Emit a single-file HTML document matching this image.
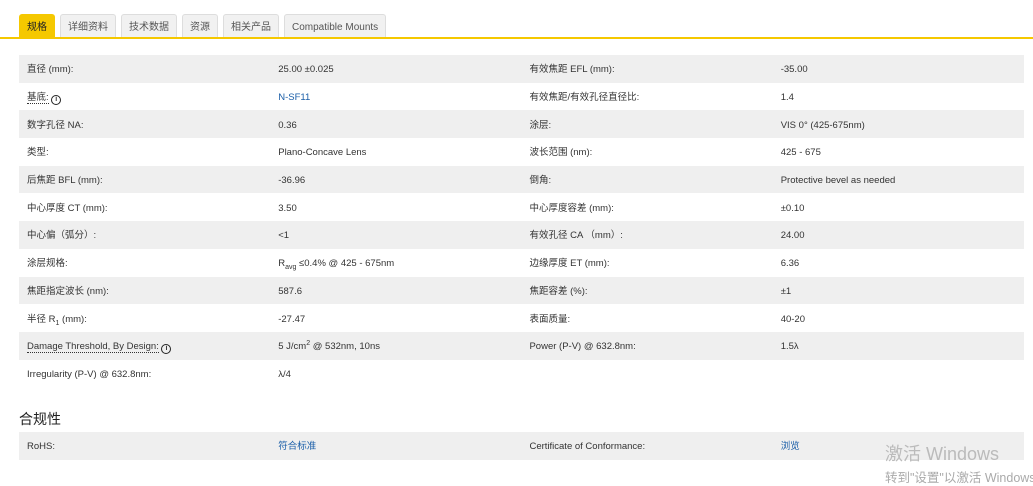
<!DOCTYPE html>
<html><head><meta charset="utf-8"><style>
body{margin:0;width:1033px;height:484px;overflow:hidden;background:#fff;font-family:"Liberation Sans","Noto Sans CJK SC",sans-serif;color:#333;font-size:10px;position:relative}
.tabs{position:absolute;left:19px;top:14px;display:flex;gap:5px}
.tab{height:24px;line-height:25px;padding:0 7px;background:#f1f1f1;border:1px solid #ddd;border-bottom:none;border-radius:3px 3px 0 0;color:#555;font-size:10px;box-sizing:border-box}
.tab.on{background:#f5c800;border-color:#f5c800;color:#222}
.line{position:absolute;left:0;right:0;top:37px;height:2px;background:#f5c800}
table{position:absolute;left:19px;width:1005px;border-collapse:collapse;table-layout:fixed}
td{height:27.7px;padding:3px 0 0 8px;box-sizing:border-box;font-size:9.5px;line-height:12px;color:#333;vertical-align:middle;width:243px;white-space:nowrap}
sub,sup{font-size:7px;line-height:0}
tr.g td{background:#efefef}
a{color:#1a5ea8;text-decoration:none}
.u{border-bottom:1px dotted #333;line-height:12px}
.i{display:inline-block;width:8px;height:8px;border:1.5px solid #222;border-radius:50%;font-size:7px;line-height:8px;text-align:center;font-weight:bold;vertical-align:-1px}
h3{position:absolute;left:19px;top:409px;margin:0;font-size:14px;font-weight:normal;color:#222}
.w1{position:absolute;left:885px;top:440px;font-size:18px;color:#bbb}
.w2{position:absolute;left:885px;top:467px;font-size:12.5px;color:#aaa;white-space:nowrap}
</style></head><body>
<div class="tabs"><div class="tab on">规格</div><div class="tab">详细资料</div><div class="tab">技术数据</div><div class="tab">资源</div><div class="tab">相关产品</div><div class="tab">Compatible Mounts</div></div>
<div class="line"></div>
<table style="top:55px">
<tr class="g"><td>直径 (mm):</td><td>25.00 ±0.025</td><td>有效焦距 EFL (mm):</td><td>-35.00</td></tr>
<tr><td><span class="u">基底:</span> <span class="i">i</span></td><td><a>N-SF11</a></td><td>有效焦距/有效孔径直径比:</td><td>1.4</td></tr>
<tr class="g"><td>数字孔径 NA:</td><td>0.36</td><td>涂层:</td><td>VIS 0° (425-675nm)</td></tr>
<tr><td>类型:</td><td>Plano-Concave Lens</td><td>波长范围 (nm):</td><td>425 - 675</td></tr>
<tr class="g"><td>后焦距 BFL (mm):</td><td>-36.96</td><td>倒角:</td><td>Protective bevel as needed</td></tr>
<tr><td>中心厚度 CT (mm):</td><td>3.50</td><td>中心厚度容差 (mm):</td><td>±0.10</td></tr>
<tr class="g"><td>中心偏（弧分）:</td><td>&lt;1</td><td>有效孔径 CA （mm）:</td><td>24.00</td></tr>
<tr><td>涂层规格:</td><td>R<sub>avg</sub> ≤0.4% @ 425 - 675nm</td><td>边缘厚度 ET (mm):</td><td>6.36</td></tr>
<tr class="g"><td>焦距指定波长 (nm):</td><td>587.6</td><td>焦距容差 (%):</td><td>±1</td></tr>
<tr><td>半径 R<sub>1</sub> (mm):</td><td>-27.47</td><td>表面质量:</td><td>40-20</td></tr>
<tr class="g"><td><span class="u">Damage Threshold, By Design:</span> <span class="i">i</span></td><td>5 J/cm<sup>2</sup> @ 532nm, 10ns</td><td>Power (P-V) @ 632.8nm:</td><td>1.5λ</td></tr>
<tr><td>Irregularity (P-V) @ 632.8nm:</td><td>λ/4</td><td></td><td></td></tr>
</table>
<h3>合规性</h3>
<table style="top:432px"><tr class="g"><td>RoHS:</td><td><a>符合标准</a></td><td>Certificate of Conformance:</td><td><a>浏览</a></td></tr></table>
<div class="w1">激活 Windows</div>
<div class="w2">转到"设置"以激活 Windows。</div>
</body></html>
